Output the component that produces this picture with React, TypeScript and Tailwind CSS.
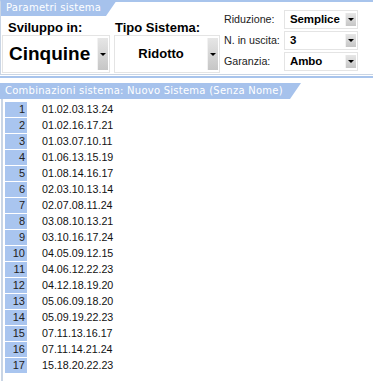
import React from "react";

const combos = [
  "01.02.03.13.24",
  "01.02.16.17.21",
  "01.03.07.10.11",
  "01.06.13.15.19",
  "01.08.14.16.17",
  "02.03.10.13.14",
  "02.07.08.11.24",
  "03.08.10.13.21",
  "03.10.16.17.24",
  "04.05.09.12.15",
  "04.06.12.22.23",
  "04.12.18.19.20",
  "05.06.09.18.20",
  "05.09.19.22.23",
  "07.11.13.16.17",
  "07.11.14.21.24",
  "15.18.20.22.23",
];

function DropButton() {
  return (
    <div className="w-[11px] my-[2px] mr-[1px] bg-linear-to-b from-[#e6e6e6] to-[#c6c6c6] border-l border-[#f2f2f2] flex items-center justify-center">
      <div className="w-0 h-0 border-x-[3px] border-x-transparent border-t-[3px] border-t-black" />
    </div>
  );
}

function SmallSelect({ label, value }: { label: string; value: string }) {
  return (
    <div className="flex items-center h-[21px]">
      <div className="w-[60px] text-[10.7px] text-[#222]">{label}</div>
      <div className="flex w-[74px] h-[19px] border border-[#e4e4e4] bg-white">
        <div className="flex-1 pl-[5px] text-[11.5px] font-bold leading-[17px] tracking-[-0.1px]">
          {value}
        </div>
        <DropButton />
      </div>
    </div>
  );
}

function Tab({ text, width }: { text: string; width: number }) {
  return (
    <div
      style={{ width }}
      className="h-[16px] bg-[#a6c2ec] text-white text-[10px] leading-[16px] pl-[5px] font-['DejaVu_Sans',sans-serif] tracking-[0.25px] [clip-path:polygon(0_0,100%_0,calc(100%-11px)_100%,0_100%)] whitespace-nowrap"
    >
      {text}
    </div>
  );
}

export default function App() {
  return (
    <div className="w-[373px] h-[381px] bg-white overflow-hidden font-['Liberation_Sans',Arial,sans-serif] text-black">
      {/* Parametri sistema */}
      <div className="flex h-[75px] border-t-2 border-[#a8c4ec] border-b border-b-[#c9d5e5] border-l border-l-[#c9d5e5]">
        <div className="flex flex-col -mt-[2px] w-[221px]">
          <Tab text="Parametri sistema" width={116} />
          <div className="flex gap-[4px] pl-[1px] pt-[3px]">
            <div className="flex flex-col w-[108px]">
              <div className="h-[16px] pl-[6px] text-[13px] font-bold leading-[17px]">
                Sviluppo in:
              </div>
              <div className="flex h-[38px] border border-[#e4e4e4]">
                <div className="flex-1 flex items-center pl-[6px] text-[19px] font-bold">
                  Cinquine
                </div>
                <DropButton />
              </div>
            </div>
            <div className="flex flex-col w-[106px]">
              <div className="h-[16px] pl-[1px] text-[13px] font-bold leading-[17px]">
                Tipo Sistema:
              </div>
              <div className="flex h-[38px] border border-[#e4e4e4]">
                <div className="flex-1 flex items-center justify-center text-[13px] font-bold">
                  Ridotto
                </div>
                <DropButton />
              </div>
            </div>
          </div>
        </div>
        <div className="flex flex-col pl-[2px] pt-[7px]">
          <SmallSelect label="Riduzione:" value="Semplice" />
          <SmallSelect label="N. in uscita:" value="3" />
          <SmallSelect label="Garanzia:" value="Ambo" />
        </div>
      </div>

      {/* Combinazioni sistema */}
      <div className="mt-[1px] border-t-2 border-[#a8c4ec] pt-[5px]">
        <Tab text="Combinazioni sistema: Nuovo Sistema (Senza Nome)" width={301} />
        <div className="ml-[1px] border-l-2 border-[#c9d5e5] pt-[3px] pl-[2px] h-[290px]">
          {combos.map((c, i) => (
            <div key={c} className="flex h-[16px] items-start">
              <div className="w-[22px] h-[15px] bg-[#a9c5ef] text-right pr-[2px] text-[11px] leading-[15px] text-[#222]">
                {i + 1}
              </div>
              <div className="pl-[15px] text-[10.7px] leading-[15px] text-[#111]">
                {c}
              </div>
            </div>
          ))}
        </div>
      </div>
    </div>
  );
}
